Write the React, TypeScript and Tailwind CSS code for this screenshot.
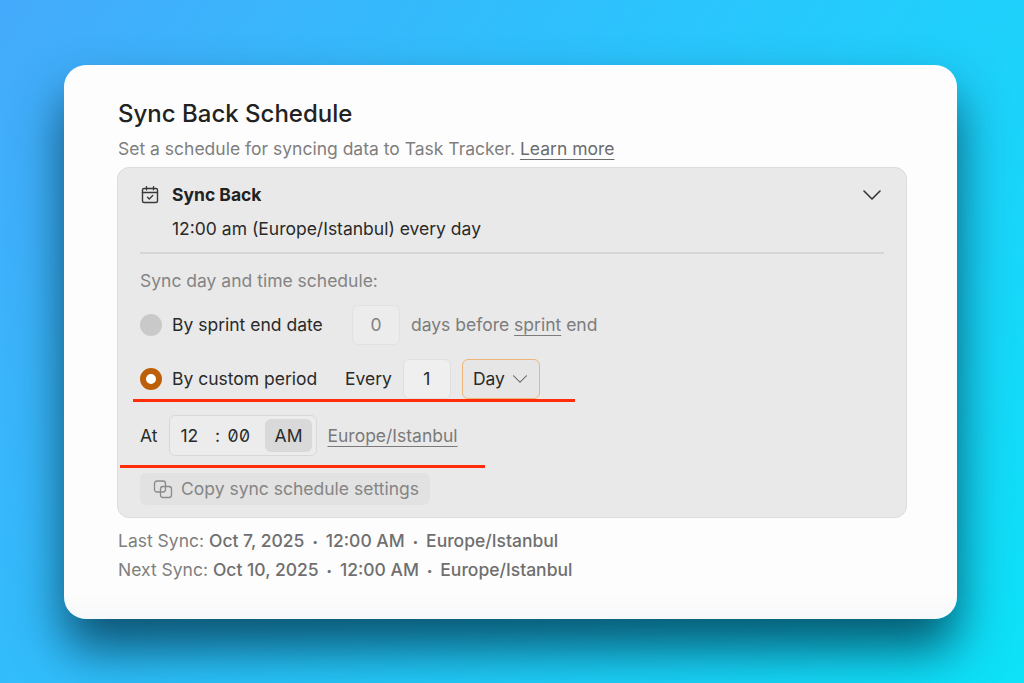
import { ChevronDown } from 'lucide-react'

function CalendarIcon() {
  return (
    <svg width="20" height="20" viewBox="0 0 20 20" fill="none" stroke="#3a3a3a" strokeWidth="1.4" strokeLinecap="round" strokeLinejoin="round">
      <rect x="2.5" y="3.5" width="15" height="14" rx="1.5" />
      <path d="M2.5 7.5h15M6.5 1.8v3M13.5 1.8v3" />
      <path d="M7.5 12.2l1.8 1.8 3.4-3.4" />
    </svg>
  )
}

function CopyIcon() {
  return (
    <svg width="20" height="20" viewBox="0 0 20 20" fill="none" stroke="#8a8a8a" strokeWidth="1.3" strokeLinejoin="round">
      <rect x="1.5" y="2" width="11" height="11" rx="2.5" />
      <rect x="7.5" y="7.5" width="11" height="11" rx="2.5" />
    </svg>
  )
}

function Dot() {
  return <span className="mx-[8px] text-[10px] align-[2px]">•</span>
}

export default function App() {
  return (
    <div
      className="relative w-[1024px] h-[683px] overflow-hidden pl-[64px] pt-[65px] bg-[linear-gradient(125deg,#45aafb_0%,#2bc4fd_45%,#0ce2f8_100%)] text-[17.5px] leading-[24px] text-[#2a2a2a]"
      style={{ fontFamily: 'Inter, "Liberation Sans", sans-serif' }}
    >
      <div className="relative w-[893px] h-[554px] rounded-[22px] bg-[linear-gradient(#fdfdfd_95%,#f7f8fa)] pl-[53px] pr-[50px] pt-[34px] shadow-[0_30px_50px_0_rgba(0,45,65,0.75)]">
        <h1 className="text-[24px] leading-[30px] font-medium text-[#222222] pl-[1px]">Sync Back Schedule</h1>
        <p className="mt-[8px] text-[#7f7f7f] pl-[1px]">
          Set a schedule for syncing data to Task Tracker.{' '}
          <span className="text-[#6c6c6c] underline underline-offset-4">Learn more</span>
        </p>

        <div className="mt-[6px] h-[351px] rounded-[12px] border border-[#dcdcdc] bg-[#e9e9e9] pl-[22px] pr-[22px] pt-[15px]">
          <div className="flex items-center justify-between h-[24px]">
            <div className="flex items-center gap-[12px]">
              <CalendarIcon />
              <span className="font-bold text-[#222222]">Sync Back</span>
            </div>
            <ChevronDown size={32} strokeWidth={1.2} color="#333333" className="-mr-[4px]" />
          </div>
          <p className="mt-[10px] pl-[32px]">12:00 am (Europe/Istanbul) every day</p>
          <div className="mt-[11px] h-[2px] bg-[#d6d6d6]" />

          <p className="mt-[15px] text-[#848484]">Sync day and time schedule:</p>

          <div className="mt-[12px] flex items-center h-[40px]">
            <span className="w-[22px] h-[22px] rounded-full bg-[#c9c9c9]" />
            <span className="ml-[10px] w-[180px]">By sprint end date</span>
            <span className="w-[48px] h-[40px] rounded-[6px] border border-[#e2e2e2] bg-[#ececec] flex items-center justify-center text-[#808080]">0</span>
            <span className="ml-[11px] text-[#7c7c7c]">
              days before <span className="underline underline-offset-4">sprint</span> end
            </span>
          </div>

          <div className="mt-[14px] flex items-center h-[40px]">
            <span className="w-[22px] h-[22px] rounded-full border-[6px] border-[#bd5f08] bg-white" />
            <span className="ml-[10px] w-[173px]">By custom period</span>
            <span>Every</span>
            <span className="ml-[11px] w-[48px] h-[40px] rounded-[6px] border border-[#dfdfdf] bg-[#efefef] flex items-center justify-center">1</span>
            <span className="ml-[11px] w-[78px] h-[40px] rounded-[6px] border border-[#eeb57a] bg-[#e6e6e6] flex items-center pl-[10px] gap-[2px]">
              Day
              <ChevronDown size={26} strokeWidth={0.95} color="#555555" />
            </span>
          </div>

          <div className="mt-[16px] flex items-center h-[41px]">
            <span>At</span>
            <div className="ml-[12px] w-[148px] h-[41px] rounded-[6px] border border-[#d8d8d8] bg-[#ececec] flex items-center pl-[10px] pr-[4px]">
              <span className="w-[24px]">12</span>
              <span className="ml-[11px] w-[13px]">:</span>
              <span className="w-[38px] slashed-zero tracking-[0.5px]">00</span>
              <span className="ml-auto w-[49px] h-[33px] rounded-[6px] bg-[#d9d9d9] flex items-center justify-center">AM</span>
            </div>
            <span className="ml-[10px] text-[#7a7a7a] underline underline-offset-4">Europe/Istanbul</span>
          </div>

          <div className="mt-[17px] w-[290px] h-[32px] rounded-[6px] bg-[#e2e2e2] flex items-center pl-[13px] gap-[8px] text-[#858585]">
            <CopyIcon />
            Copy sync schedule settings
          </div>
        </div>

        <p className="mt-[11px] text-[#7f7f7f] pl-[1px]">
          Last Sync: <span className="font-medium text-[#6f6f6f]">Oct 7, 2025<Dot />12:00 AM<Dot />Europe/Istanbul</span>
        </p>
        <p className="mt-[5px] text-[#7f7f7f] pl-[1px]">
          Next Sync: <span className="font-medium text-[#6f6f6f]">Oct 10, 2025<Dot />12:00 AM<Dot />Europe/Istanbul</span>
        </p>
      </div>

      <div className="absolute left-[133px] top-[399px] w-[442px] h-[3px] bg-[#ff2d0a]" />
      <div className="absolute left-[120px] top-[465px] w-[365px] h-[3px] bg-[#ff2d0a]" />
    </div>
  )
}
